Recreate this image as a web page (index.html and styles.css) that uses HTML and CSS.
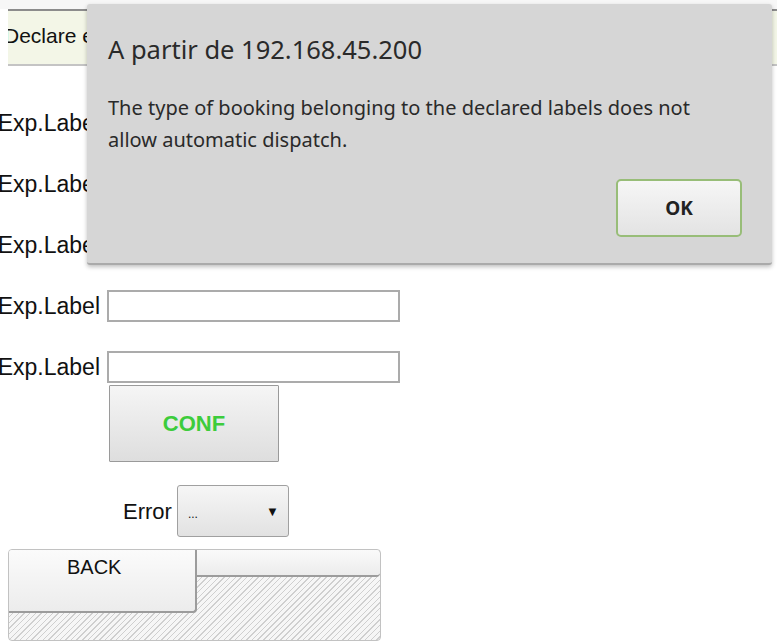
FILE: index.html
```html
<!DOCTYPE html>
<html>
<head>
    <meta name="viewport" content="width=device-width, initial-scale=1" />
    <title>Declare</title>
    <link rel="stylesheet" href="styles.css">
</head>

<body>

<div class="top-strip"></div>

<div class="header-bar">
    <span class="header-title">Declare exp. labels</span>
</div>

<div class="form">
    <div class="row">
        <div class="label-cell"><span>Exp.Label</span></div>
        <input type="text" class="field" />
    </div>
    <div class="row">
        <div class="label-cell"><span>Exp.Label</span></div>
        <input type="text" class="field" />
    </div>
    <div class="row">
        <div class="label-cell"><span>Exp.Label</span></div>
        <input type="text" class="field" />
    </div>
    <div class="row">
        <div class="label-cell"><span>Exp.Label</span></div>
        <input type="text" class="field" />
    </div>
    <div class="row">
        <div class="label-cell"><span>Exp.Label</span></div>
        <input type="text" class="field" />
    </div>
</div>

<button class="conf-button">CONF</button>

<div class="error-row">
    <span class="error-label">Error</span>
    <div class="select-box">
        <span class="select-value">...</span>
        <span class="select-arrow">&#9660;</span>
    </div>
</div>

<div class="back-area">
    <button class="back-button">BACK</button>
    <div class="back-strip"></div>
</div>

<!-- browser alert -->
<div class="dialog">
    <h1 class="dialog-title">A partir de 192.168.45.200</h1>
    <p class="dialog-text">The type of booking belonging to the declared labels does not allow automatic dispatch.</p>
    <div class="dialog-actions">
        <button class="ok-button">OK</button>
    </div>
</div>

</body>
</html>
```

FILE: styles.css
```css
body {
    margin: 0;
    padding: 0;
    background-color: #ffffff;
    color: #111111;
    font-family: "Liberation Sans", Arial, sans-serif;
    overflow: hidden;
}

.top-strip {
    height: 9px;
    background-color: #f7f7f7;
}

.header-bar {
    margin-left: 8px;
    height: 53px;
    border-top: 2px solid #8c8c8c;
    border-bottom: 2px solid #c4c4c4;
    background-color: #f3f6e7;
    display: flex;
    align-items: center;
    overflow: hidden;
}

.header-title {
    font-size: 21px;
    margin-left: -4px;
    margin-bottom: 4px;
    white-space: nowrap;
}

.form {
    margin-top: 41px;
    display: flex;
    flex-direction: column;
    gap: 29px;
}

.row {
    display: flex;
    align-items: center;
    gap: 7px;
}

.label-cell {
    width: 100px;
    display: flex;
    justify-content: flex-end;
    overflow: hidden;
    white-space: nowrap;
    font-size: 23px;
}

.field {
    box-sizing: border-box;
    width: 293px;
    height: 32px;
    margin: 0;
    border: 2px solid #ababab;
    background-color: #ffffff;
}

.conf-button {
    display: block;
    box-sizing: border-box;
    margin: 2px 0 0 109px;
    width: 170px;
    height: 77px;
    border: 1px solid #9a9a9a;
    border-radius: 1px;
    background: linear-gradient(#f5f5f5, #dedede);
    color: #3ccc3c;
    font-family: "Liberation Sans", Arial, sans-serif;
    font-weight: bold;
    font-size: 22px;
}

.error-row {
    margin-top: 23px;
    padding-left: 123px;
    display: flex;
    align-items: center;
    gap: 5px;
}

.error-label {
    font-size: 22px;
    margin-top: 2px;
}

.select-box {
    box-sizing: border-box;
    width: 112px;
    height: 52px;
    border: 1px solid #a0a0a0;
    border-radius: 3px;
    background: linear-gradient(#f6f6f6, #e2e2e2);
    display: flex;
    align-items: center;
    justify-content: space-between;
    padding: 0 9px 0 10px;
}

.select-value {
    font-size: 12px;
    margin-top: 6px;
}

.select-arrow {
    font-size: 13px;
    color: #111111;
}

.back-area {
    box-sizing: border-box;
    margin: 12px 0 0 8px;
    width: 373px;
    height: 92px;
    border: 1px solid #c2c2c2;
    border-radius: 4px;
    background-color: #f4f4f4;
    background-image: repeating-linear-gradient(135deg, #f6f6f6 0px, #f6f6f6 3px, #cfcfcf 3px, #cfcfcf 4px);
    display: grid;
    grid-template-columns: 188px 1fr;
    grid-template-rows: 27px 36px 1fr;
    overflow: hidden;
}

.back-button {
    grid-column: 1;
    grid-row: 1 / 3;
    margin: 0;
    border: none;
    border-right: 2px solid #9c9c9c;
    border-bottom: 2px solid #9c9c9c;
    border-bottom-right-radius: 4px;
    background: linear-gradient(#fbfbfb, #ececec);
    font-family: "Liberation Sans", Arial, sans-serif;
    font-size: 20px;
    color: #111111;
    text-align: left;
    padding: 6px 0 0 58px;
    align-self: stretch;
    display: flex;
    align-items: flex-start;
}

.back-strip {
    grid-column: 2;
    grid-row: 1;
    border-bottom: 2px solid #9c9c9c;
    border-radius: 0 4px 4px 0;
    background: linear-gradient(#fafafa, #ececec);
}

.dialog {
    position: absolute;
    top: 4px;
    left: 87px;
    box-sizing: border-box;
    width: 685px;
    height: 261px;
    padding: 27px 21px 0 21px;
    background-color: #d6d6d6;
    border-radius: 3px;
    border-bottom: 2px solid #aaaaaa;
    box-shadow: 0 2px 4px rgba(0, 0, 0, 0.25);
    font-family: "Noto Sans", "Open Sans", sans-serif;
    color: #2a2a2a;
}

.dialog-title {
    margin: 0;
    font-size: 25.5px;
    font-weight: normal;
    line-height: 36px;
}

.dialog-text {
    margin: 25px 0 0 0;
    font-size: 20px;
    line-height: 32px;
    width: 600px;
}

.dialog-actions {
    display: flex;
    justify-content: flex-end;
    margin-top: 23px;
    padding-right: 9px;
}

.ok-button {
    box-sizing: border-box;
    width: 126px;
    height: 58px;
    border: 2px solid #98bd78;
    border-radius: 5px;
    background: linear-gradient(#f6f6f6, #e3e3e3);
    font-family: "Noto Sans", "Open Sans", sans-serif;
    font-weight: bold;
    font-size: 19px;
    color: #222222;
}
```
